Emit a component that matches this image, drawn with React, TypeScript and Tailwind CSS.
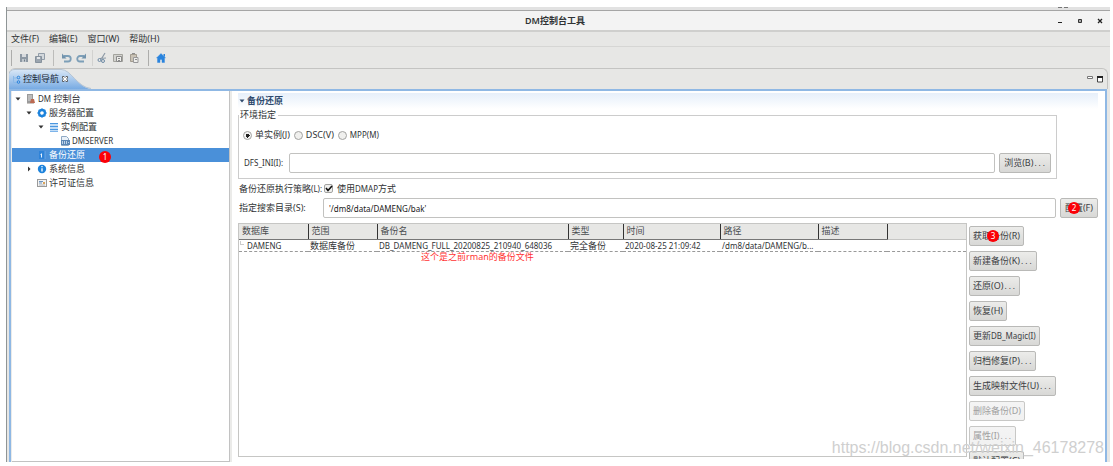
import React, { useState } from 'react';

interface TreeItem {
    label: React.ReactNode;
    level: number;
    icon: React.ReactNode;
    arrow?: 'open' | 'closed';
    selected?: boolean;
}

const Latin: React.FC<{ children: React.ReactNode }> = ({ children }) => (
    <span className="text-[8px]">{children}</span>
);

const Dots = () => <span className="font-['Liberation_Mono'] text-[7px]">...</span>;

const Arrow: React.FC<{ dir?: 'open' | 'closed' }> = ({ dir }) => (
    <svg className="w-[8px] h-[8px] shrink-0" viewBox="0 0 8 8" fill="#333">
        {dir === 'open' && <path d="M1.500 2.500h5L4 5.500z" />}
        {dir === 'closed' && <path d="M3 1.500v5L5.500 4z" />}
    </svg>
);

// Tree icons
const ConsoleIcon = () => (
    <svg className="w-[10px] h-[10px] shrink-0" viewBox="0 0 10 10">
        <rect x="1" y="0" width="6" height="9" fill="#9a9a9a" />
        <path d="M2 2h4M2 4h4M2 6h3" stroke="#ddd" />
        <path d="M5 5h3l1 4H4z" fill="#bc6a52" />
        <rect x="1" y="9" width="7" height="1" fill="#c9c4c0" />
    </svg>
);

const GearIcon = () => (
    <svg className="w-[10px] h-[10px] shrink-0" viewBox="0 0 10 10">
        <circle cx="5" cy="5" r="3" fill="#fff" stroke="#1d83dc" strokeWidth="2.400" />
        <path d="M5 .5v1M5 8.500v1M.5 5h1M8.500 5h1M1.700 1.700l1 1M7.300 7.300l1 1M8.300 1.700l-1 1M1.700 8.300l1-1" stroke="#1d83dc" strokeWidth="1.500" />
    </svg>
);

const ListIcon = () => (
    <svg className="w-[10px] h-[10px] shrink-0" viewBox="0 0 10 10">
        <rect x="1" y="1" width="8" height="9" fill="#c3ddf6" />
        <path d="M1 1.500h8M1 4.500h8M1 7.500h8" stroke="#4b97e0" />
        <path d="M1 9.500h8" stroke="#7db4ea" />
    </svg>
);

const ServerIcon = () => (
    <svg className="w-[10px] h-[10px] shrink-0" viewBox="0 0 10 10">
        <path d="M1.500.5h5l2 2v7h-7z" fill="#eaf1f8" stroke="#8fa9c4" />
        <rect x="1" y="4" width="9" height="5" fill="#5b86b5" />
        <path d="M2.500 5v3M4.500 5v3M6.500 5v3M8 6.500h1" stroke="#dbe8f5" strokeWidth=".8" />
    </svg>
);

const BackupIcon = () => (
    <svg className="w-[10px] h-[10px] shrink-0" viewBox="0 0 10 10">
        <rect x="2" y="1" width="6" height="8" fill="#2f83d8" />
        <path d="M4.500 3.500v4M3.500 4.500h1" stroke="#e8f2fc" />
        <path d="M8 1v8" stroke="#7cb3ec" strokeWidth=".7" />
    </svg>
);

const InfoIcon = () => (
    <svg className="w-[10px] h-[10px] shrink-0" viewBox="0 0 10 10">
        <circle cx="5" cy="5" r="4.200" fill="#1d83dc" />
        <path d="M5 4.200v3.300M5 2v1.200" stroke="#fff" strokeWidth="1.300" />
    </svg>
);

const LicenseIcon = () => (
    <svg className="w-[10px] h-[10px] shrink-0" viewBox="0 0 10 10">
        <rect x=".5" y="1.500" width="9" height="7" fill="#f3f3f3" stroke="#9a9a9a" />
        <path d="M2 3.500h4M2 5h3" stroke="#6e94bd" />
        <path d="M2 7h6" stroke="#b5b5b5" />
        <rect x="6" y="4" width="2" height="2" fill="#d8a45c" />
    </svg>
);

const treeItems: TreeItem[] = [
    { label: <><Latin>DM</Latin> 控制台</>, level: 0, icon: <ConsoleIcon />, arrow: 'open' },
    { label: '服务器配置', level: 1, icon: <GearIcon />, arrow: 'open' },
    { label: '实例配置', level: 2, icon: <ListIcon />, arrow: 'open' },
    { label: <Latin>DMSERVER</Latin>, level: 3, icon: <ServerIcon /> },
    { label: '备份还原', level: 1, icon: <BackupIcon />, selected: true },
    { label: '系统信息', level: 1, icon: <InfoIcon />, arrow: 'closed' },
    { label: '许可证信息', level: 1, icon: <LicenseIcon /> },
];

const levelPadding = ['pl-[2px]', 'pl-[13px]', 'pl-[25px]', 'pl-[36px]'];

const menus = ['文件(F)', '编辑(E)', '窗口(W)', '帮助(H)'];

// Toolbar icons, drawn on a 12x12 grid
const toolIcons: { [key: string]: React.ReactNode } = {
    save: (
        <>
            <path d="M2 2h8v8H2z" fill="#8e99a4" />
            <path d="M4 2h4v3H4z" fill="#d9dcdf" />
            <path d="M4 7h4v3H4z" fill="#c0c7cd" />
            <path d="M6.500 7.500v2" stroke="#6f7b86" />
        </>
    ),
    saveAll: (
        <>
            <path d="M4.500 1.500h6v6h-6z" fill="#d3d8dc" stroke="#929da8" />
            <path d="M1.500 4.500h6v6h-6z" fill="#9ba5af" stroke="#87929d" />
            <path d="M3 5h3v2H3z" fill="#e3e5e7" />
        </>
    ),
    undo: (
        <>
            <path d="M4 4h4a2.500 2.500 0 0 1 0 5.500H4" fill="none" stroke="#7d9fb8" strokeWidth="1.800" />
            <path d="M2 1.500v5h4.500z" fill="#7293ac" />
        </>
    ),
    redo: (
        <>
            <path d="M8 4H4a2.500 2.500 0 0 0 0 5.500h4" fill="none" stroke="#7d9fb8" strokeWidth="1.800" />
            <path d="M10 1.500v5H5.500z" fill="#7293ac" />
        </>
    ),
    cut: (
        <>
            <path d="M9 1L5 7.500M10 6L4 6.500" stroke="#8d9aa6" strokeWidth="1.200" />
            <circle cx="3.500" cy="8" r="1.500" fill="none" stroke="#6f8ba5" />
            <circle cx="7" cy="9" r="1.500" fill="none" stroke="#6f8ba5" />
        </>
    ),
    copy: (
        <>
            <path d="M1.500 2.500h9v7h-9z" fill="#d3d3cf" stroke="#a3a39d" />
            <path d="M4.500 4.500h5v5h-5z" fill="#ededea" stroke="#8a8a8a" />
            <path d="M6 6.500h2M6 8.500h2" stroke="#8d8d8d" />
        </>
    ),
    paste: (
        <>
            <path d="M2.500 2.500h6v7h-6z" fill="#c9c2b5" stroke="#a39c90" />
            <path d="M4 1.500h3" stroke="#8d8d8d" />
            <path d="M5.500 5.500h4.500v5H5.500z" fill="#ededea" stroke="#98989a" />
            <path d="M7 7.500h2" stroke="#8d8d8d" />
        </>
    ),
    home: (
        <>
            <path d="M6 1.500l4.500 4.500H9.500v4.500H7V7.500H5v3H2.500V6h-1z" fill="#2a84dd" stroke="#2a84dd" strokeWidth=".4" />
            <path d="M8.500 2h1.500v3L8.500 4z" fill="#2a84dd" />
        </>
    ),
};

const ToolButton: React.FC<{ name: string }> = ({ name }) => (
    <button aria-label={name} className="w-4 h-4 flex items-center justify-center">
        <svg className="w-[12px] h-[12px]" viewBox="0 0 12 12">{toolIcons[name]}</svg>
    </button>
);

const Separator: React.FC<{ className: string }> = ({ className }) => (
    <div className={`h-4 w-px ${className}`} />
);

const columns = [
    { name: '数据库', width: 'w-[69px]' },
    { name: '范围', width: 'w-[69px]' },
    { name: '备份名', width: 'w-[191px]' },
    { name: '类型', width: 'w-[55px]' },
    { name: '时间', width: 'w-[97px]' },
    { name: '路径', width: 'w-[98px]' },
    { name: '描述', width: 'w-[69px]' },
];

const actions: { label: React.ReactNode; disabled?: boolean; badge?: string }[] = [
    { label: '获取备份(R)', badge: '3' },
    { label: <>新建备份(K)<Dots /></> },
    { label: <>还原(O)<Dots /></> },
    { label: '恢复(H)' },
    { label: <>更新<Latin>DB_Magic(I)</Latin></> },
    { label: <>归档修复(P)<Dots /></> },
    { label: <>生成映射文件(U)<Dots /></> },
    { label: '删除备份(D)', disabled: true },
    { label: <>属性(I)<Dots /></>, disabled: true },
    { label: '默认配置(C)' },
];

const Badge: React.FC<{ children: React.ReactNode; className: string }> = ({ children, className }) => (
    <span className={`absolute w-[12px] h-[12px] rounded-full bg-[#fb0007] text-white text-[8px] leading-[12px] text-center ${className}`}>
        {children}
    </span>
);

const PushButton: React.FC<{ children: React.ReactNode; disabled?: boolean; padding?: string }> = ({ children, disabled, padding = 'px-[3px]' }) => (
    <button
        disabled={disabled}
        className={`relative h-5 shrink-0 whitespace-nowrap rounded-xs border border-[#b9b9b7] bg-linear-to-b from-[#ececea] to-[#d8d8d6] text-[#3c4043] disabled:border-[#c8c8c6] disabled:from-[#f4f4f4] disabled:to-[#f1f1f1] disabled:text-[#a0a0a0] ${padding}`}
    >
        {children}
    </button>
);

const inputStyle = 'h-5 min-w-0 flex-1 border border-[#c2c2c0] rounded-xs bg-white px-[5px] text-[8px] text-[#202020] outline-none';

const App: React.FC = () => {
    const [mode, setMode] = useState('single');
    const [useDmap, setUseDmap] = useState(true);
    const [dfsIni, setDfsIni] = useState('');
    const [searchDir, setSearchDir] = useState("'/dm8/data/DAMENG/bak'");

    const modes = [
        { id: 'single', label: '单实例(J)' },
        { id: 'dsc', label: 'DSC(V)' },
        { id: 'mpp', label: <Latin>MPP(M)</Latin> },
    ];

    return (
        <div className="relative h-screen overflow-hidden bg-white pt-[7px] pb-1 pl-[6px] pr-[3px] font-['Noto_Sans','Noto_Sans_CJK_SC',sans-serif] text-[9px] leading-[12px] text-[#303335]">
            <div className="h-full flex flex-col border-l border-[#8f9596] bg-[#e7e7e5]">
                <div className="h-[3px] shrink-0 flex justify-end gap-[2px] pr-[42px] bg-[#e2e2e2]">
                    <span className="w-1 h-px bg-[#777]" />
                    <span className="w-1 h-px bg-[#777]" />
                </div>

                {/* Title bar */}
                <header className="h-[22px] shrink-0 flex items-center border-t border-t-[#a5a5a5] border-b-2 border-b-[#cfcfcd] bg-[#f3f3f3]">
                    <div className="w-[49px]" />
                    <h1 className="flex-1 text-center font-semibold">DM控制台工具</h1>
                    <div className="w-[56px] flex justify-between pl-[2px] pr-[6px]">
                        <button aria-label="最小化">
                            <svg className="w-[8px] h-[8px]" viewBox="0 0 8 8"><path d="M2 5.500h4" stroke="#222" /></svg>
                        </button>
                        <button aria-label="最大化">
                            <svg className="w-[8px] h-[8px]" viewBox="0 0 8 8"><path d="M2.500 2.500h3v3h-3z" fill="#aaa" stroke="#333" /></svg>
                        </button>
                        <button aria-label="关闭">
                            <svg className="w-[8px] h-[8px]" viewBox="0 0 8 8"><path d="M2 2l4 4M6 2l-4 4" stroke="#222" strokeWidth="1.300" /></svg>
                        </button>
                    </div>
                </header>

                {/* Menu */}
                <nav className="h-[15px] shrink-0 flex items-center gap-[10px] pl-[4px] border-b border-[#d6d6d4]">
                    {menus.map(menu => (
                        <button key={menu}>{menu}</button>
                    ))}
                </nav>

                {/* Toolbar */}
                <div className="h-[21px] shrink-0 flex items-center">
                    <Separator className="ml-1 mr-1 bg-[#adadab]" />
                    <ToolButton name="save" />
                    <ToolButton name="saveAll" />
                    <Separator className="ml-[5px] mr-1 bg-[#bcbcba]" />
                    <ToolButton name="undo" />
                    <ToolButton name="redo" />
                    <Separator className="ml-[2px] mr-px bg-[#d2d2d0]" />
                    <ToolButton name="cut" />
                    <ToolButton name="copy" />
                    <ToolButton name="paste" />
                    <Separator className="ml-[6px] mr-1 bg-[#adadab]" />
                    <ToolButton name="home" />
                </div>

                {/* View tab */}
                <div className="h-[21px] shrink-0 mx-[2px] flex items-center justify-between rounded-t-md border-t border-r border-[#c4c4c2]">
                    <div className="relative h-full w-[84px]">
                        <svg className="absolute left-0 top-0 w-full h-full" viewBox="0 0 84 21" preserveAspectRatio="none">
                            <defs>
                                <linearGradient id="tab" x1="0" y1="0" x2="0" y2="1">
                                    <stop offset="0" stopColor="#dce9f7" />
                                    <stop offset="1" stopColor="#78abe3" />
                                </linearGradient>
                            </defs>
                            <path d="M0 21V5Q1 0 6 0H52C62 0 68 19 82 21z" fill="url(#tab)" />
                            <path d="M0 5Q1 .5 6 .5H52C62 .5 68 19 82 20.500" fill="none" stroke="#b5c3d2" />
                        </svg>
                        <div className="relative h-full flex items-center pl-[3px]">
                            <svg className="w-[9px] h-[9px] mr-[2px]" viewBox="0 0 9 9">
                                <path d="M1.500 1v6.500H5M1.500 3H5" fill="none" stroke="#8ab9e8" />
                                <circle cx="6.500" cy="2.500" r="1.300" fill="none" stroke="#2b83db" />
                                <circle cx="6.500" cy="7" r="1.300" fill="none" stroke="#2b83db" />
                            </svg>
                            <span className="text-[#1c2835]">控制导航</span>
                            <button aria-label="关闭视图" className="ml-[2px]">
                                <svg className="w-[8px] h-[8px]" viewBox="0 0 8 8">
                                    <path d="M1.500 1.500h1.500L4 2.500l1-1h1.500V3l-1 1 1 1v1.500H5l-1-1-1 1H1.500V5l1-1-1-1z" fill="#fff" stroke="#444" strokeWidth=".8" />
                                </svg>
                            </button>
                        </div>
                    </div>
                    <div className="flex gap-[2px] pr-[3px]">
                        <svg className="w-[8px] h-[8px]" viewBox="0 0 8 8"><path d="M1.500 1.500h5v2h-5z" fill="#fff" stroke="#777" /></svg>
                        <svg className="w-[8px] h-[8px]" viewBox="0 0 8 8"><path d="M1.500 2v5h5V2z" fill="#fff" stroke="#444" /><path d="M1 2h6" stroke="#222" strokeWidth="2" /></svg>
                    </div>
                </div>

                <div className="flex-1 min-h-0 ml-[2px] mr-[3px] flex border-t-2 border-x-2 border-[#8fb8e4] bg-[#ebebe9]">
                    {/* Navigation tree */}
                    <aside className="ml-px w-[218px] shrink-0 pt-px bg-white border-r border-b border-[#c2c2c2]">
                        {treeItems.map((item, index) => (
                            <div
                                key={index}
                                className={`relative h-[14px] flex items-center ${levelPadding[item.level]} ${item.selected ? 'bg-[#4a90d9] text-white' : ''}`}
                            >
                                <Arrow dir={item.arrow} />
                                <span className="w-[4px]" />
                                {item.icon}
                                <span className="ml-[2px]">{item.label}</span>
                                {item.selected && <Badge className="left-[87px] top-[3px] z-10">1</Badge>}
                            </div>
                        ))}
                    </aside>

                    {/* Backup panel */}
                    <main className="flex-1 min-w-0 ml-[2px] pl-[6px] pr-[7px] pb-[3px] flex flex-col bg-white">
                        <h2 className="mt-[2px] h-4 shrink-0 flex items-center gap-px pl-px bg-linear-to-b from-[#e6effa] to-white font-semibold text-[#2f4a6d]">
                            <svg className="w-[7px] h-[8px]" viewBox="0 0 7 8"><path d="M.5 2.500h5L3 5.500z" fill="#2f4a6d" /></svg>
                            备份还原
                        </h2>

                        <fieldset className="min-w-0 mr-[41px] border border-[#cccccc] pl-1 pr-[5px] pb-[5px]">
                            <legend className="-ml-1 pl-px pr-[2px] leading-[12px]">环境指定</legend>
                            <div className="mt-2 flex items-center gap-1">
                                {modes.map(m => (
                                    <label key={m.id} className="flex items-center gap-[3px] h-3">
                                        <input
                                            type="radio"
                                            name="mode"
                                            checked={mode === m.id}
                                            onChange={() => setMode(m.id)}
                                            className="appearance-none w-[9px] h-[9px] rounded-full border border-[#a3a3a1] bg-[#f0f0ee] checked:bg-[radial-gradient(circle,#222_0_2px,#f4f4f4_2px)]"
                                        />
                                        {m.label}
                                    </label>
                                ))}
                            </div>
                            <div className="mt-3 flex items-center">
                                <label htmlFor="dfs" className="w-[46px] shrink-0 pl-px"><Latin>DFS_INI(I):</Latin></label>
                                <input id="dfs" value={dfsIni} onChange={e => setDfsIni(e.target.value)} className={inputStyle} />
                                <div className="ml-1 flex"><PushButton padding="px-1">浏览(B)<Dots /></PushButton></div>
                            </div>
                        </fieldset>

                        <div className="mt-1 shrink-0 h-[11px] flex items-center pl-px">
                            <span className="w-[85px] whitespace-nowrap">备份还原执行策略<Latin>(L):</Latin></span>
                            <label className="flex items-center gap-1">
                                <span className="relative flex">
                                    <input
                                        type="checkbox"
                                        checked={useDmap}
                                        onChange={e => setUseDmap(e.target.checked)}
                                        className="appearance-none w-[9px] h-[9px] rounded-xs border border-[#a3a3a1] bg-[#f0f0ee]"
                                    />
                                    {useDmap && (
                                        <svg className="absolute inset-0 pointer-events-none" viewBox="0 0 9 9">
                                            <path d="M2 4l2 2.500 4-4.500" fill="none" stroke="#111" strokeWidth="1.600" />
                                        </svg>
                                    )}
                                </span>
                                <span>使用<Latin>DMAP</Latin>方式</span>
                            </label>
                        </div>

                        <div className="mt-1 shrink-0 flex items-center pl-px">
                            <label htmlFor="dir" className="w-[84px] shrink-0">指定搜索目录(S):</label>
                            <input id="dir" value={searchDir} onChange={e => setSearchDir(e.target.value)} className={inputStyle} />
                            <div className="relative ml-1 flex">
                                <PushButton padding="px-1">配置(F)</PushButton>
                                <Badge className="left-2 top-1">2</Badge>
                            </div>
                        </div>

                        <div className="mt-[5px] flex-1 min-h-0 flex">
                            <div className="relative flex-1 min-w-0 mb-[2px] border border-[#c6c6c4]">
                                <table className="w-full table-fixed border-collapse text-left">
                                    <thead>
                                        <tr className="h-[15px] bg-[#e7e7e5]">
                                            {columns.map(col => (
                                                <th key={col.name} className={`${col.width} pl-[3px] font-normal border-r border-r-[#333] border-b border-b-[#777] text-[#4a4d50]`}>
                                                    {col.name}
                                                </th>
                                            ))}
                                            <th className="border-b border-[#c6c6c4]" />
                                        </tr>
                                    </thead>
                                    <tbody>
                                        <tr className="h-[12px] leading-[11px] border-b border-dashed border-[#999] whitespace-nowrap">
                                            <td><span className="inline-block w-1 h-1 ml-px mr-[3px] mb-1 border-l border-b border-[#ccc]" /><Latin>DAMENG</Latin></td>
                                            <td className="pl-[2px]">数据库备份</td>
                                            <td className="pl-[2px]"><Latin>DB_DAMENG_FULL_20200825_210940_648036</Latin></td>
                                            <td className="pl-[2px]">完全备份</td>
                                            <td className="pl-[2px]"><Latin>2020-08-25 21:09:42</Latin></td>
                                            <td className="pl-[2px]"><Latin>/dm8/data/DAMENG/b...</Latin></td>
                                            <td />
                                            <td />
                                        </tr>
                                    </tbody>
                                </table>
                                <p className="absolute left-[182px] top-[27px] leading-[12px] text-[#f33]">这个是之前rman的备份文件</p>
                            </div>

                            <div className="w-[129px] ml-[2px] pt-[3px] shrink-0 flex flex-col items-start gap-[5px] overflow-hidden">
                                {actions.map((action, index) => (
                                    <div key={index} className="relative flex">
                                        <PushButton disabled={action.disabled}>{action.label}</PushButton>
                                        {action.badge && <Badge className="left-[18px] top-1">{action.badge}</Badge>}
                                    </div>
                                ))}
                            </div>
                        </div>
                    </main>
                </div>
            </div>

            {/* Watermark */}
            <p className="absolute right-[9px] bottom-[8px] font-['Liberation_Sans'] text-[16px] leading-5 text-[#cfcfcf] pointer-events-none">
                https://blog.csdn.net/weixin_46178278
            </p>
        </div>
    );
};

export default App;
